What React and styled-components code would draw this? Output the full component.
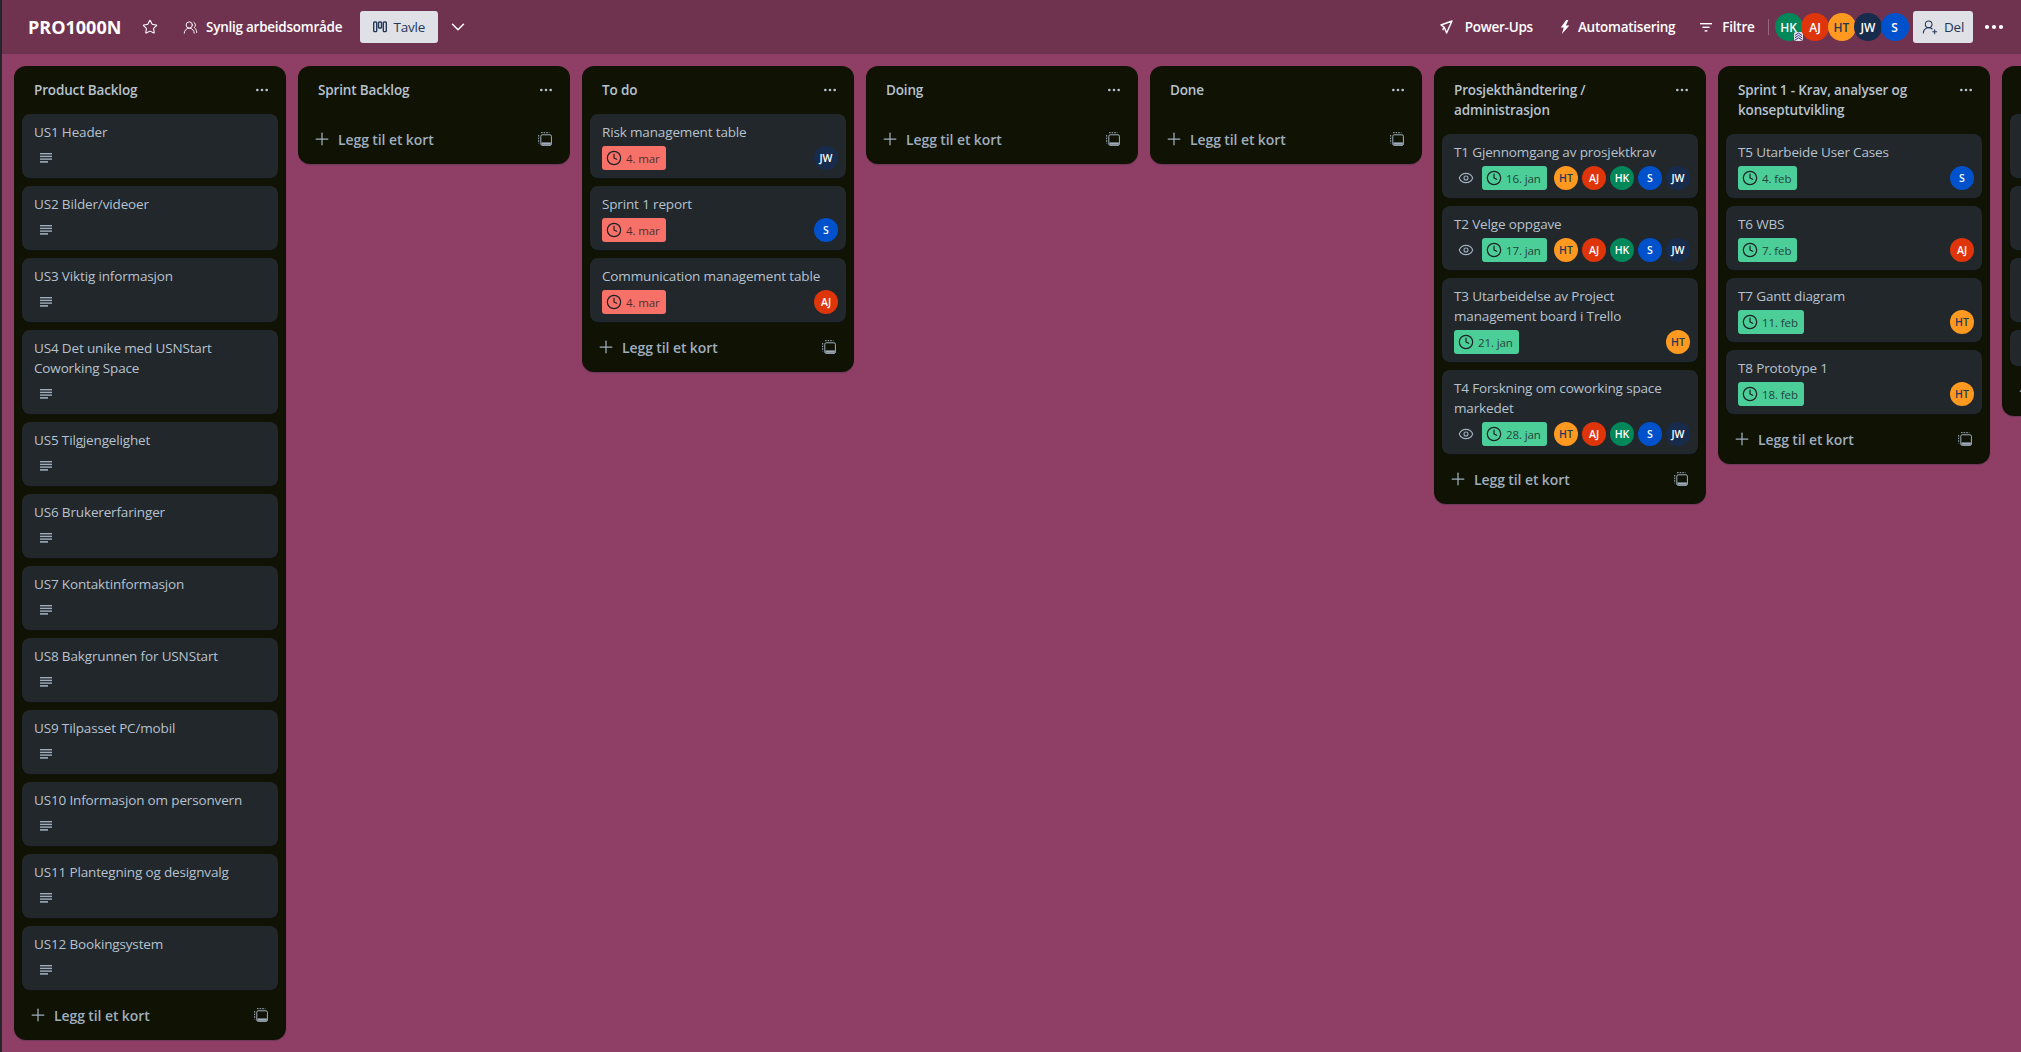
import React from 'react';
import styled, { createGlobalStyle } from 'styled-components';
import { Star, ChevronDown, Clock, Eye, Plus, Ellipsis, UsersRound, UserRoundPlus } from 'lucide-react';

const GlobalStyle = createGlobalStyle`
  html, body {
    margin: 0;
    height: 100%;
    overflow: hidden;
    background: #8f3f65;
    font-family: "Open Sans", "Noto Sans", "Liberation Sans", sans-serif;
  }
`;

const colours = {
  HK: '#00875a',
  AJ: '#de350b',
  HT: '#ff991f',
  JW: '#172b4d',
  S: '#0052cc',
};

const ALL = ['HT', 'AJ', 'HK', 'S', 'JW'];

const backlog = [
  'US1 Header',
  'US2 Bilder/videoer',
  'US3 Viktig informasjon',
  'US4 Det unike med USNStart Coworking Space',
  'US5 Tilgjengelighet',
  'US6 Brukererfaringer',
  'US7 Kontaktinformasjon',
  'US8 Bakgrunnen for USNStart',
  'US9 Tilpasset PC/mobil',
  'US10 Informasjon om personvern',
  'US11 Plantegning og designvalg',
  'US12 Bookingsystem',
].map((title) => ({ title, description: true }));

const lists = [
  { title: 'Product Backlog', cards: backlog },
  { title: 'Sprint Backlog', cards: [] },
  {
    title: 'To do',
    cards: [
      { title: 'Risk management table', date: '4. mar', late: true, members: ['JW'] },
      { title: 'Sprint 1 report', date: '4. mar', late: true, members: ['S'] },
      { title: 'Communication management table', date: '4. mar', late: true, members: ['AJ'] },
    ],
  },
  { title: 'Doing', cards: [] },
  { title: 'Done', cards: [] },
  {
    title: 'Prosjekthåndtering / administrasjon',
    cards: [
      { title: 'T1 Gjennomgang av prosjektkrav', watched: true, date: '16. jan', members: ALL },
      { title: 'T2 Velge oppgave', watched: true, date: '17. jan', members: ALL },
      { title: 'T3 Utarbeidelse av Project management board i Trello', date: '21. jan', members: ['HT'] },
      { title: 'T4 Forskning om coworking space markedet', watched: true, date: '28. jan', members: ALL },
    ],
  },
  {
    title: 'Sprint 1 - Krav, analyser og konseptutvikling',
    cards: [
      { title: 'T5 Utarbeide User Cases', date: '4. feb', members: ['S'] },
      { title: 'T6 WBS', date: '7. feb', members: ['AJ'] },
      { title: 'T7 Gantt diagram', date: '11. feb', members: ['HT'] },
      { title: 'T8 Prototype 1', date: '18. feb', members: ['HT'] },
    ],
  },
  // the next list runs off the right edge, only its left rim shows
  {
    title: '',
    cards: [{ meta: true }, { meta: true }, { meta: true }, {}],
  },
];

const DescriptionIcon = () => (
  <svg width="12" height="10" viewBox="0 0 12 10" fill="currentColor">
    <rect width="12" height="1.4" />
    <rect y="2.7" width="12" height="1.4" />
    <rect y="5.4" width="12" height="1.4" />
    <rect y="8.1" width="8" height="1.6" />
  </svg>
);

const TemplateIcon = () => (
  <svg width="14" height="14" viewBox="0 0 14 14" fill="none" stroke="currentColor" strokeWidth="1">
    <path d="M3 .7h8.4M.7 3v8.4" strokeDasharray="1.6 1" />
    <rect x="2.8" y="2.8" width="10.6" height="10.6" rx="1.4" />
    <path d="M3.4 10.4h9.4v2.4H3.4z" fill="currentColor" stroke="none" />
  </svg>
);

const BoardIcon = () => (
  <svg width="14" height="12" viewBox="0 0 14 12" fill="none" stroke="currentColor" strokeWidth="1.4">
    <rect x="0.7" y="1" width="3" height="9.6" rx="0.8" />
    <rect x="5.5" y="1" width="3" height="6" rx="0.8" />
    <rect x="10.3" y="1" width="3" height="9.6" rx="0.8" />
  </svg>
);

const RocketIcon = () => (
  <svg width="13" height="14" viewBox="0 0 13 14" fill="none" stroke="currentColor" strokeWidth="1.4" strokeLinejoin="round">
    <path d="M12 1 1 5l3.4 2.4L6.6 13 12 1Z" />
    <path d="M4.4 7.4 2.6 10" />
  </svg>
);

const BoltIcon = () => (
  <svg width="10" height="14" viewBox="0 0 10 14" fill="currentColor">
    <path d="M6.2 0 .8 7.6h3L1.8 14 9.4 5.4H5.8L8.4 0H6.2Z" />
  </svg>
);

const FilterIcon = () => (
  <svg width="12" height="9" viewBox="0 0 12 9" fill="currentColor">
    <rect width="12" height="1.4" />
    <rect x="2.4" y="3.6" width="7.2" height="1.4" />
    <rect x="4.6" y="7.2" width="2.8" height="1.4" />
  </svg>
);

const AdminIcon = () => (
  <svg width="9" height="9" viewBox="0 0 9 9" fill="none" stroke="#403294" strokeWidth="1">
    <path d="M1 3.4 4.5 1 8 3.4M1 5.8l3.5-2.4L8 5.8M1 8.2l3.5-2.4L8 8.2" />
  </svg>
);

const App = () => (
  <>
    <GlobalStyle />
    <Page>
      <Header>
        <BoardName>PRO1000N</BoardName>
        <StarButton><Star size={16} strokeWidth={1.6} /></StarButton>
        <HeaderAction $after={18} $gap={8}>
          <UsersRound size={15} strokeWidth={1.5} />
          Synlig arbeidsområde
        </HeaderAction>
        <LightButton $width={78}>
          <BoardIcon />
          Tavle
        </LightButton>
        <ChevronButton><ChevronDown size={22} strokeWidth={1.6} /></ChevronButton>

        <HeaderRight>
          <HeaderAction $gap={12} $after={27}><RocketIcon />Power-Ups</HeaderAction>
          <HeaderAction $gap={8} $after={25}><BoltIcon />Automatisering</HeaderAction>
          <HeaderAction $gap={10} $after={13}><FilterIcon />Filtre</HeaderAction>
          <Divider />
          <Members>
            {['HK', 'AJ', 'HT', 'JW', 'S'].map((name) => (
              <Member key={name} $bg={colours[name]}>
                {name}
                {name === 'HK' && <AdminBadge><AdminIcon /></AdminBadge>}
              </Member>
            ))}
          </Members>
          <LightButton $width={60}>
            <UserRoundPlus size={16} strokeWidth={1.6} />
            Del
          </LightButton>
          <MoreButton><Ellipsis size={24} strokeWidth={2.2} /></MoreButton>
        </HeaderRight>
      </Header>

      <Board>
        {lists.map((list, i) => (
          <List key={i}>
            <ListHeader>
              <ListTitle>{list.title}</ListTitle>
              <ListMenu><Ellipsis size={16} /></ListMenu>
            </ListHeader>
            {list.cards.length > 0 && (
              <Cards>
                {list.cards.map((card, j) => (
                  <Card key={j}>
                    <CardTitle>{card.title}</CardTitle>
                    {(card.description || card.date || card.meta) && (
                      <CardMeta>
                        {card.description && <MetaIcon><DescriptionIcon /></MetaIcon>}
                        {card.watched && <MetaIcon><Eye size={16} strokeWidth={1.7} /></MetaIcon>}
                        {card.date && (
                          <DateBadge $late={card.late}>
                            <Clock size={16} strokeWidth={1.8} />
                            <span>{card.date}</span>
                          </DateBadge>
                        )}
                        {card.members && (
                          <CardMembers>
                            {card.members.map((name) => (
                              <CardMember key={name} $bg={colours[name]} $dark={name === 'HT'}>{name}</CardMember>
                            ))}
                          </CardMembers>
                        )}
                      </CardMeta>
                    )}
                  </Card>
                ))}
              </Cards>
            )}
            <ListFooter>
              <AddCard>
                <Plus size={20} strokeWidth={1.5} />
                {list.title && 'Legg til et kort'}
              </AddCard>
              <TemplateButton><TemplateIcon /></TemplateButton>
            </ListFooter>
          </List>
        ))}
      </Board>
    </Page>
  </>
);

const Page = styled.div`
  height: 100vh;
  display: flex;
  flex-direction: column;
  overflow: hidden;
  border-left: 2px solid #25262c;
  background: #8f3f65;
`;

const Header = styled.header`
  flex: none;
  height: 54px;
  display: flex;
  align-items: center;
  padding: 0 15px 0 26px;
  background: #6f3350;
  color: #fff;
`;

const BoardName = styled.h1`
  margin: 0;
  width: 106px;
  font-size: 18px;
  font-weight: 700;
  line-height: 32px;
  white-space: nowrap;
`;

const StarButton = styled.span`
  width: 32px;
  display: flex;
  justify-content: center;
  margin-right: 17px;
`;

const HeaderAction = styled.span`
  display: flex;
  align-items: center;
  gap: ${(p) => p.$gap}px;
  margin-right: ${(p) => p.$after}px;
  font-size: 13.5px;
  font-weight: 600;
  letter-spacing: -0.25px;
  white-space: nowrap;
`;

const LightButton = styled.span`
  width: ${(p) => p.$width}px;
  height: 32px;
  display: flex;
  align-items: center;
  justify-content: center;
  gap: 6px;
  border-radius: 3px;
  background: #dfe1e6;
  color: #253858;
  font-size: 13.5px;
  letter-spacing: -0.2px;
`;

const ChevronButton = styled.span`
  display: flex;
  margin-left: 9px;
`;

const HeaderRight = styled.div`
  margin-left: auto;
  display: flex;
  align-items: center;
`;

const Divider = styled.span`
  width: 1px;
  height: 16px;
  margin-right: 6px;
  background: rgba(255, 255, 255, 0.25);
`;

const Members = styled.div`
  display: flex;
  margin-right: 6px;
`;

const Member = styled.span`
  position: relative;
  width: 28px;
  height: 28px;
  margin-right: -1.5px;
  display: flex;
  align-items: center;
  justify-content: center;
  border-radius: 50%;
  background: ${(p) => p.$bg};
  color: ${(p) => (p.$bg === '#ff991f' ? '#253858' : '#fff')};
  font-size: 12px;
  font-weight: 600;
`;

const AdminBadge = styled.span`
  position: absolute;
  right: 0;
  bottom: 0;
  width: 9px;
  height: 9px;
  display: flex;
  border-radius: 2px;
  background: #dfe1e6;
`;

const MoreButton = styled.span`
  display: flex;
  margin-left: 9px;
`;

const Board = styled.main`
  flex: 1;
  display: flex;
  align-items: flex-start;
  gap: 12px;
  padding: 12px 0 0 12px;
  overflow: hidden;
`;

const List = styled.section`
  flex: none;
  width: 272px;
  border-radius: 12px;
  background: #101204;
  box-shadow: 0 1px 1px #091e4240;
  color: #b6c2cf;
`;

const ListHeader = styled.div`
  display: flex;
  align-items: flex-start;
  justify-content: space-between;
  min-height: 20px;
  padding: 14px 16px 14px 20px;
`;

const ListTitle = styled.h2`
  margin: 0;
  max-width: 205px;
  font-size: 13.5px;
  font-weight: 600;
  letter-spacing: -0.15px;
  line-height: 20px;
`;

const ListMenu = styled.span`
  display: flex;
  margin-top: 2px;
`;

const Cards = styled.div`
  display: flex;
  flex-direction: column;
  gap: 8px;
  padding: 0 8px;
`;

const Card = styled.article`
  padding: 8px 8px 8px 12px;
  border-radius: 8px;
  background: #22272b;
  box-shadow: 0 1px 1px #091e4240;
`;

const CardTitle = styled.div`
  min-height: 20px;
  font-size: 13.5px;
  letter-spacing: -0.15px;
  line-height: 20px;
`;

const CardMeta = styled.div`
  display: flex;
  align-items: center;
  gap: 4px;
  min-height: 24px;
  margin-top: 4px;
`;

const MetaIcon = styled.span`
  width: 24px;
  height: 24px;
  display: flex;
  align-items: center;
  justify-content: center;
  color: #9fadbc;
`;

const DateBadge = styled.span`
  height: 24px;
  display: flex;
  align-items: center;
  gap: 4px;
  padding: 0 6px 0 4px;
  border-radius: 3px;
  background: ${(p) => (p.$late ? '#f87168' : '#4bce97')};
  color: #1d2125;
  font-size: 11.5px;
  letter-spacing: -0.1px;

  span {
    opacity: 0.8;
  }
`;

const CardMembers = styled.div`
  margin-left: auto;
  display: flex;
  gap: 4px;
`;

const CardMember = styled.span`
  width: 24px;
  height: 24px;
  display: flex;
  align-items: center;
  justify-content: center;
  border-radius: 50%;
  background: ${(p) => p.$bg};
  color: ${(p) => (p.$dark ? '#253858' : '#fff')};
  font-size: 10.5px;
  font-weight: 600;
`;

const ListFooter = styled.div`
  height: 50px;
  display: flex;
  align-items: center;
  justify-content: space-between;
  padding: 0 18px 0 14px;
  color: #9fadbc;
`;

const AddCard = styled.span`
  display: flex;
  align-items: center;
  gap: 6px;
  font-size: 14px;
  font-weight: 600;
  letter-spacing: -0.1px;
`;

const TemplateButton = styled.span`
  display: flex;
`;

export default App;
